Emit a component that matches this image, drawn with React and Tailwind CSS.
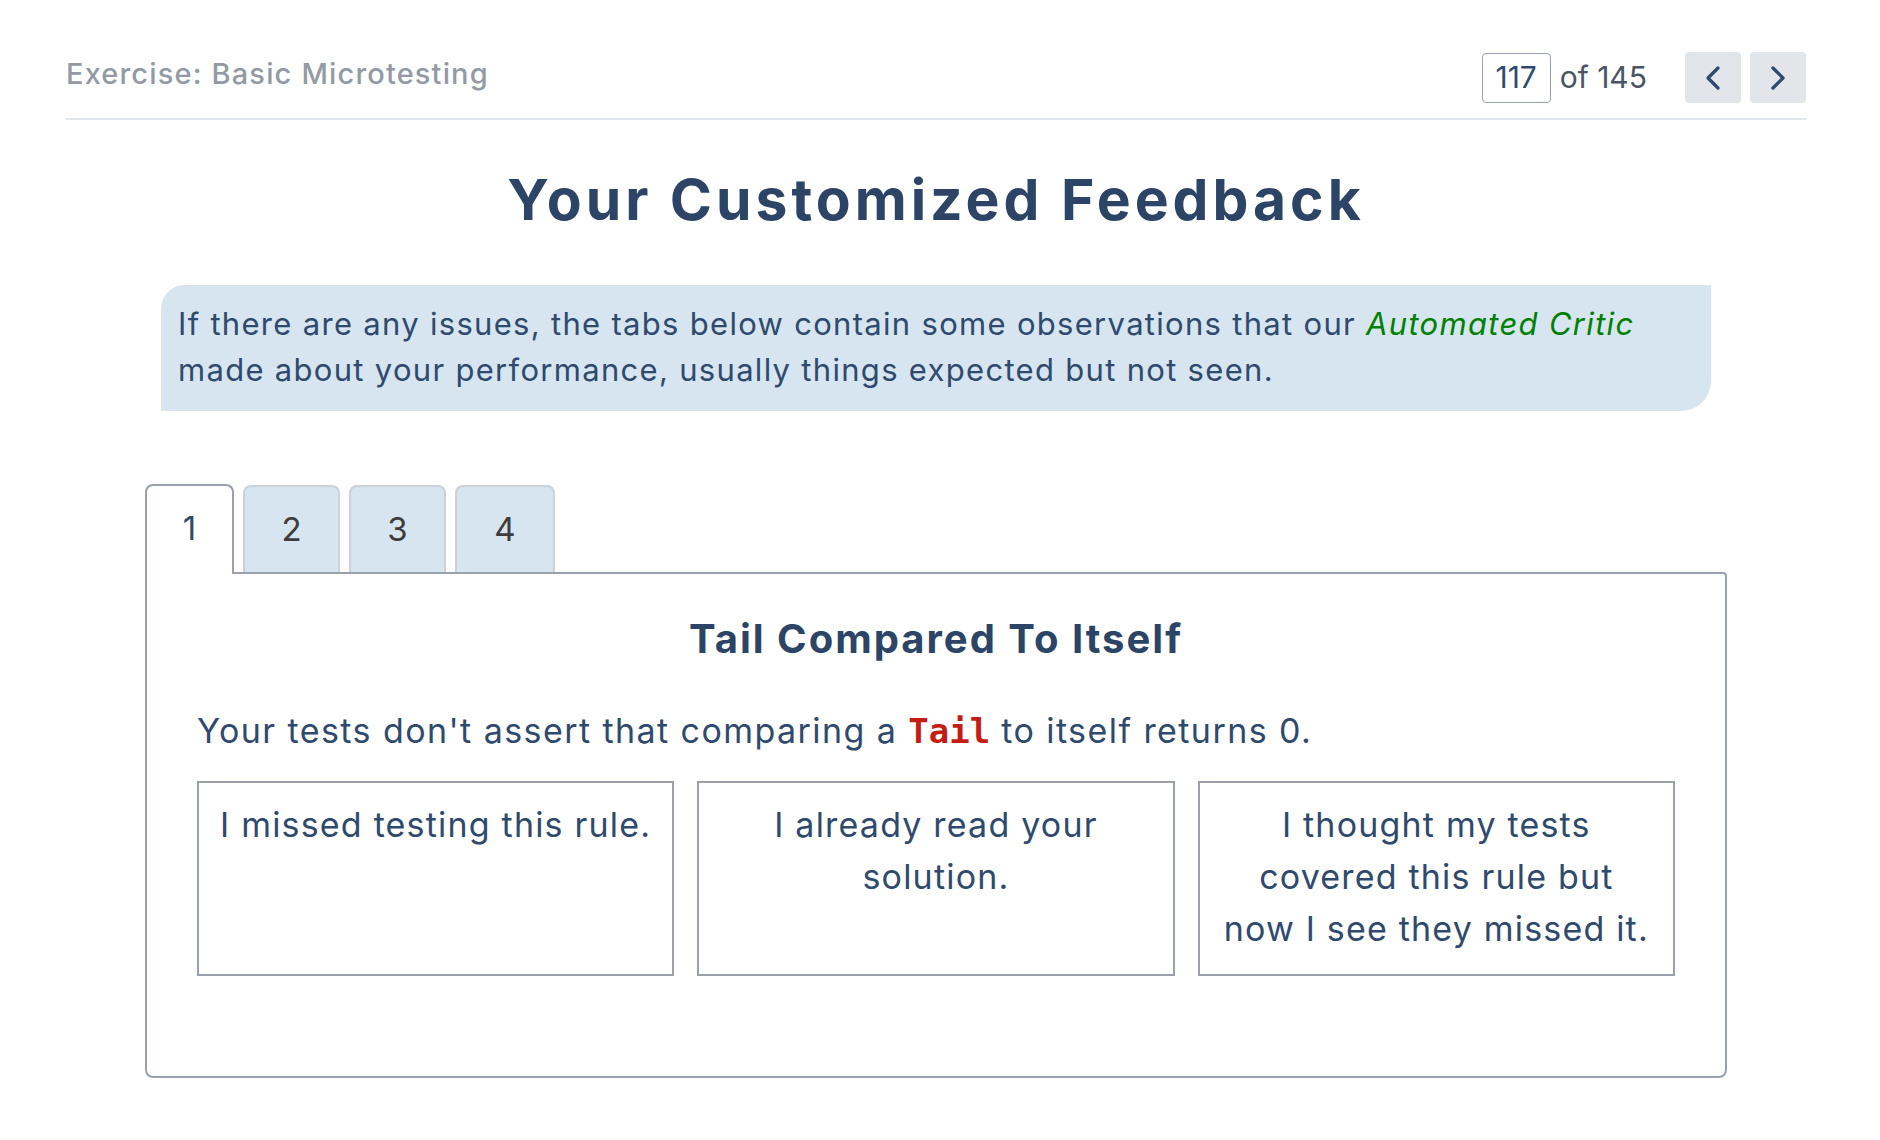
import React from "react";
import { ChevronLeft, ChevronRight } from "lucide-react";

function Tab({ label, active }) {
  if (active) {
    return (
      <div className="relative z-10 -mb-[2px] flex h-[90px] w-[89px] items-center justify-center rounded-t-[8px] border-2 border-b-0 border-[#9aa1aa] bg-white pb-[2px] text-[33px] text-[#2f4a6d]">
        {label}
      </div>
    );
  }
  return (
    <div className="flex h-[87px] items-center justify-center rounded-t-[8px] border-2 border-b-0 border-[#cdd1d6] bg-[#d6e5f0] text-[33px] text-[#3d3d3d]" style={{ width: label === "4" ? 100 : 97 }}>
      {label}
    </div>
  );
}

function Card({ children }) {
  return (
    <div className="h-[195px] border-2 border-[#9aa1aa] px-[20px] pt-[16px] text-center text-[34px] leading-[52px] tracking-[0.035em] text-[#2f4a6d]">
      {children}
    </div>
  );
}

export default function App() {
  return (
    <div className="min-h-screen bg-white font-['Inter',sans-serif] text-[#2f4a6d]">
      <div className="ml-[66px] w-[1740px]">
        <header className="flex h-[120px] items-start justify-between border-b-2 border-[#e3e6ea]">
          <div className="mt-[56px] text-[29px] font-medium leading-[36px] tracking-[0.04em] text-[#939aa3]">
            Exercise: Basic Microtesting
          </div>
          <div className="mt-[52px] flex items-center">
            <div className="flex h-[50px] w-[69px] items-center justify-center rounded-[4px] border border-[#9aa1aa] text-[30px] text-[#2f4a6d]">
              117
            </div>
            <div className="ml-[9px] text-[30px] text-[#4b5563]">of 145</div>
            <button className="ml-[38px] flex h-[51px] w-[56px] items-center justify-center rounded-[4px] bg-[#e2e6eb]">
              <ChevronLeft size={40} strokeWidth={2} color="#2f4a6d" />
            </button>
            <button className="ml-[9px] flex h-[51px] w-[56px] items-center justify-center rounded-[4px] bg-[#e2e6eb]">
              <ChevronRight size={40} strokeWidth={2} color="#2f4a6d" />
            </button>
          </div>
        </header>

        <h1 className="mt-[48px] text-center text-[57px] font-bold leading-[64px] tracking-[0.07em] text-[#2c4566]">
          Your Customized Feedback
        </h1>

        <div className="ml-[95px] mt-[53px] w-[1550px] rounded-tl-[24px] rounded-br-[30px] bg-[#d6e5f0] pb-[18px] pl-[17px] pr-[40px] pt-[16px] text-[31px] leading-[46px] tracking-[0.042em] text-[#2f4a6d]">
          If there are any issues, the tabs below contain some observations that our{" "}
          <em className="text-[#008000]">Automated Critic</em> made about your performance, usually things expected but not seen.
        </div>

        <div className="ml-[79px] mt-[73px] w-[1582px]">
          <div className="flex items-end gap-[9px]">
            <Tab label="1" active />
            <Tab label="2" />
            <Tab label="3" />
            <Tab label="4" />
          </div>
          <div className="rounded-b-[8px] rounded-tr-[4px] border-2 border-[#9aa1aa] px-[50px] pb-[100px] pt-[41px]">
            <h2 className="text-center text-[40px] font-bold leading-[48px] tracking-[0.05em] text-[#2c4566]">
              Tail Compared To Itself
            </h2>
            <p className="mt-[44px] text-[34px] leading-[48px] tracking-[0.042em] text-[#2f4a6d]">
              Your tests don't assert that comparing a{" "}
              <code className="font-['DejaVu_Sans_Mono',monospace] font-bold tracking-normal text-[#c41d16]">Tail</code> to itself returns 0.
            </p>
            <div className="mt-[26px] grid grid-cols-3 gap-[23px]">
              <Card>I missed testing this rule.</Card>
              <Card>I already read your solution.</Card>
              <Card>I thought my tests covered this rule but now I see they missed it.</Card>
            </div>
          </div>
        </div>
      </div>
    </div>
  );
}
